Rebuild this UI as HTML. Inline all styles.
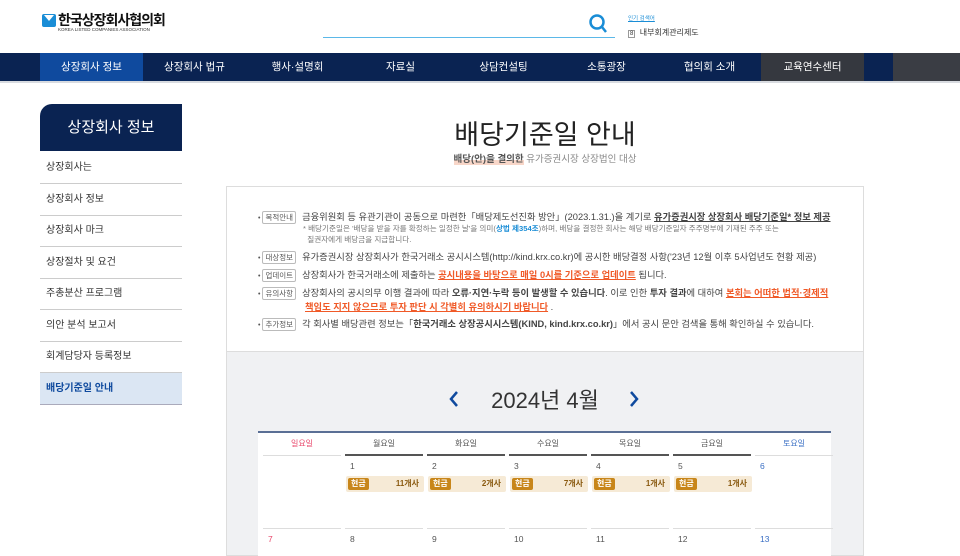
<!DOCTYPE html><html><head><meta charset="utf-8"><style>
*{margin:0;padding:0;box-sizing:border-box}
body{width:960px;height:556px;overflow:hidden;background:#fff;font-family:"Liberation Sans","Noto Sans CJK KR",sans-serif;position:relative;color:#333}
.a{position:absolute}
.nav{top:53px;left:0;width:960px;height:28px;background:#0a2352}
.nav div{position:absolute;top:0;height:28px;line-height:28px;color:#fff;font-size:10.5px;text-align:center;width:103px}
.side div.i{position:absolute;left:40px;width:142px;height:31.5px;border-bottom:1px solid #ccc;font-size:10px;color:#333;padding-left:6px;line-height:31px}
.tag{display:inline-block;border:1px solid #bbb;border-radius:2px;font-size:7.5px;padding:0 2px;color:#555;line-height:11px;margin-right:6px;background:#fff}
.ln{position:absolute;left:258px;font-size:9.3px;color:#444;white-space:nowrap}
.ln .d{font-size:7px;color:#555;margin-right:2px}
.or{color:#f05a28;text-decoration:underline;font-weight:bold}
.dh{position:absolute;top:432px;width:78px;height:24px;line-height:24px;text-align:center;font-size:8px;color:#555;border-bottom:2px solid #555}
.n{position:absolute;font-size:8.5px;color:#555}
.b{position:absolute;top:476px;width:78px;height:16px;background:#f6ead6;border-radius:2px;font-size:8px;color:#8a5a10;font-weight:bold;text-align:right;padding-right:5px;line-height:16px}
.b span{position:absolute;left:2px;top:2px;background:#c8861a;color:#fff;border-radius:2px;padding:0 3px;line-height:12px}
.sep{position:absolute;top:528px;width:78px;border-top:1px solid #ddd}
</style></head><body>
<div class="a" style="left:42px;top:14px;width:14px;height:13px;background:#1a8dd6;border-radius:2px"></div>
<div class="a" style="left:44px;top:15px;width:10px;height:6px;background:#fff;clip-path:polygon(0 0,50% 100%,100% 0)"></div>
<div class="a" style="left:58px;top:10px;font-size:14px;font-weight:bold;color:#111;letter-spacing:-1px">한국상장회사협의회</div>
<div class="a" style="left:58px;top:27px;font-size:4.5px;color:#333">KOREA LISTED COMPANIES ASSOCIATION</div>
<div class="a" style="left:323px;top:37px;width:292px;border-top:1px solid #5bb8e8"></div>
<svg class="a" style="left:588px;top:13px" width="20" height="22"><circle cx="9" cy="9" r="6.5" fill="none" stroke="#1a8dd6" stroke-width="2.5"/><line x1="14" y1="14" x2="18" y2="19" stroke="#1a8dd6" stroke-width="2.5"/></svg>
<div class="a" style="left:628px;top:14px;font-size:5.5px;color:#1a8dd6;text-decoration:underline">인기 검색어</div>
<div class="a" style="left:628px;top:27px;font-size:8px;color:#333"><span style="border:1px solid #999;font-size:6px;padding:0 1px">8</span>&nbsp; 내부회계관리제도</div>
<div class="a nav">
<div style="left:40px;background:#0f4a9e">상장회사 정보</div>
<div style="left:143px">상장회사 법규</div>
<div style="left:246px">행사·설명회</div>
<div style="left:349px">자료실</div>
<div style="left:452px">상담컨설팅</div>
<div style="left:555px">소통광장</div>
<div style="left:658px">협의회 소개</div>
<div style="left:761px;background:#35383f">교육연수센터</div>
<div style="left:893px;width:67px;background:#3a3d44"></div>
</div>
<div class="a" style="top:81px;left:0;width:960px;height:2px;background:#d8dbe0"></div>
<div class="a" style="left:40px;top:104px;width:142px;height:47px;background:#0a2352;border-top-left-radius:12px;color:#fff;font-size:15px;text-align:center;line-height:47px">상장회사 정보</div>
<div class="side">
<div class="i" style="top:152px">상장회사는</div>
<div class="i" style="top:184px">상장회사 정보</div>
<div class="i" style="top:215px">상장회사 마크</div>
<div class="i" style="top:247px">상장절차 및 요건</div>
<div class="i" style="top:278px">주총분산 프로그램</div>
<div class="i" style="top:310px">의안 분석 보고서</div>
<div class="i" style="top:341px">회계담당자 등록정보</div>
<div class="i" style="top:373px;background:#dbe6f3;color:#0f4a9e;font-weight:bold;border-bottom:1px solid #aab">배당기준일 안내</div>
</div>
<div class="a" style="left:226px;top:113px;width:638px;text-align:center;font-size:27px;color:#222">배당기준일 안내</div>
<div class="a" style="left:226px;top:151px;width:638px;text-align:center;font-size:9.5px;color:#888"><b style="color:#555;background:linear-gradient(transparent 55%,#f8d6c8 55%)">배당(안)을 결의한</b> 유가증권시장 상장법인 대상</div>
<div class="a" style="left:226px;top:186px;width:638px;height:370px;background:#f0f1f3;border:1px solid #ddd"></div>
<div class="a" style="left:227px;top:187px;width:636px;height:165px;background:#fff;border-bottom:1px solid #ddd"></div>
<div class="ln" style="top:209px"><span class="d">•</span><span class="tag">목적안내</span>금융위원회 등 유관기관이 공동으로 마련한「배당제도선진화 방안」(2023.1.31.)을 계기로 <b style="text-decoration:underline">유가증권시장 상장회사 배당기준일* 정보 제공</b></div>
<div class="ln" style="top:223px;left:303px;font-size:7.6px;color:#777">* 배당기준일은 '배당을 받을 자를 확정하는 일정한 날'을 의미(<b style="color:#1a8dd6">상법 제354조</b>)하며, 배당을 결정한 회사는 해당 배당기준일자 주주명부에 기재된 주주 또는<br>&nbsp;&nbsp;질권자에게 배당금을 지급합니다.</div>
<div class="ln" style="top:249px"><span class="d">•</span><span class="tag">대상정보</span>유가증권시장 상장회사가 한국거래소 공시시스템(http://kind.krx.co.kr)에 공시한 배당결정 사항('23년 12월 이후 5사업년도 현황 제공)</div>
<div class="ln" style="top:267px"><span class="d">•</span><span class="tag">업데이트</span>상장회사가 한국거래소에 제출하는 <span class="or">공시내용을 바탕으로 매일 0시를 기준으로 업데이트</span> 됩니다.</div>
<div class="ln" style="top:285px"><span class="d">•</span><span class="tag">유의사항</span>상장회사의 공시의무 이행 결과에 따라 <b>오류·지연·누락 등이 발생할 수 있습니다</b>. 이로 인한 <b>투자 결과</b>에 대하여 <span class="or">본회는 어떠한 법적·경제적</span></div>
<div class="ln" style="top:299px;left:305px"><span class="or">책임도 지지 않으므로 투자 판단 시 각별히 유의하시기 바랍니다</span> .</div>
<div class="ln" style="top:316px"><span class="d">•</span><span class="tag">추가정보</span>각 회사별 배당관련 정보는「<b>한국거래소 상장공시시스템(KIND, kind.krx.co.kr)</b>」에서 공시 문안 검색을 통해 확인하실 수 있습니다.</div>
<svg class="a" style="left:448px;top:390px" width="12" height="18"><path d="M9 2L3 9l6 7" fill="none" stroke="#0f4a9e" stroke-width="2.5"/></svg>
<svg class="a" style="left:628px;top:390px" width="12" height="18"><path d="M3 2l6 7-6 7" fill="none" stroke="#0f4a9e" stroke-width="2.5"/></svg>
<div class="a" style="left:470px;top:383px;width:150px;text-align:center;font-size:22px;color:#333">2024년 4월</div>
<div class="a" style="left:258px;top:431px;width:573px;height:125px;background:#fff;border-top:2px solid #5a6f95"></div>
<div class="dh" style="left:263px;color:#e8466a;border-bottom:1px solid #ddd">일요일</div>
<div class="dh" style="left:345px">월요일</div>
<div class="dh" style="left:427px">화요일</div>
<div class="dh" style="left:509px">수요일</div>
<div class="dh" style="left:591px">목요일</div>
<div class="dh" style="left:673px">금요일</div>
<div class="dh" style="left:755px;color:#3a6fc4;border-bottom:1px solid #ddd">토요일</div>
<div class="n" style="left:350px;top:461px">1</div><div class="n" style="left:432px;top:461px">2</div><div class="n" style="left:514px;top:461px">3</div><div class="n" style="left:596px;top:461px">4</div><div class="n" style="left:678px;top:461px">5</div><div class="n" style="left:760px;top:461px;color:#3a6fc4">6</div>
<div class="b" style="left:346px"><span>현금</span>11개사</div>
<div class="b" style="left:428px"><span>현금</span>2개사</div>
<div class="b" style="left:510px"><span>현금</span>7개사</div>
<div class="b" style="left:592px"><span>현금</span>1개사</div>
<div class="b" style="left:674px"><span>현금</span>1개사</div>
<div class="sep" style="left:263px"></div><div class="sep" style="left:345px"></div><div class="sep" style="left:427px"></div><div class="sep" style="left:509px"></div><div class="sep" style="left:591px"></div><div class="sep" style="left:673px"></div><div class="sep" style="left:755px"></div>
<div class="n" style="left:268px;top:534px;color:#e8466a">7</div><div class="n" style="left:350px;top:534px">8</div><div class="n" style="left:432px;top:534px">9</div><div class="n" style="left:514px;top:534px">10</div><div class="n" style="left:596px;top:534px">11</div><div class="n" style="left:678px;top:534px">12</div><div class="n" style="left:760px;top:534px;color:#3a6fc4">13</div>
</body></html>
